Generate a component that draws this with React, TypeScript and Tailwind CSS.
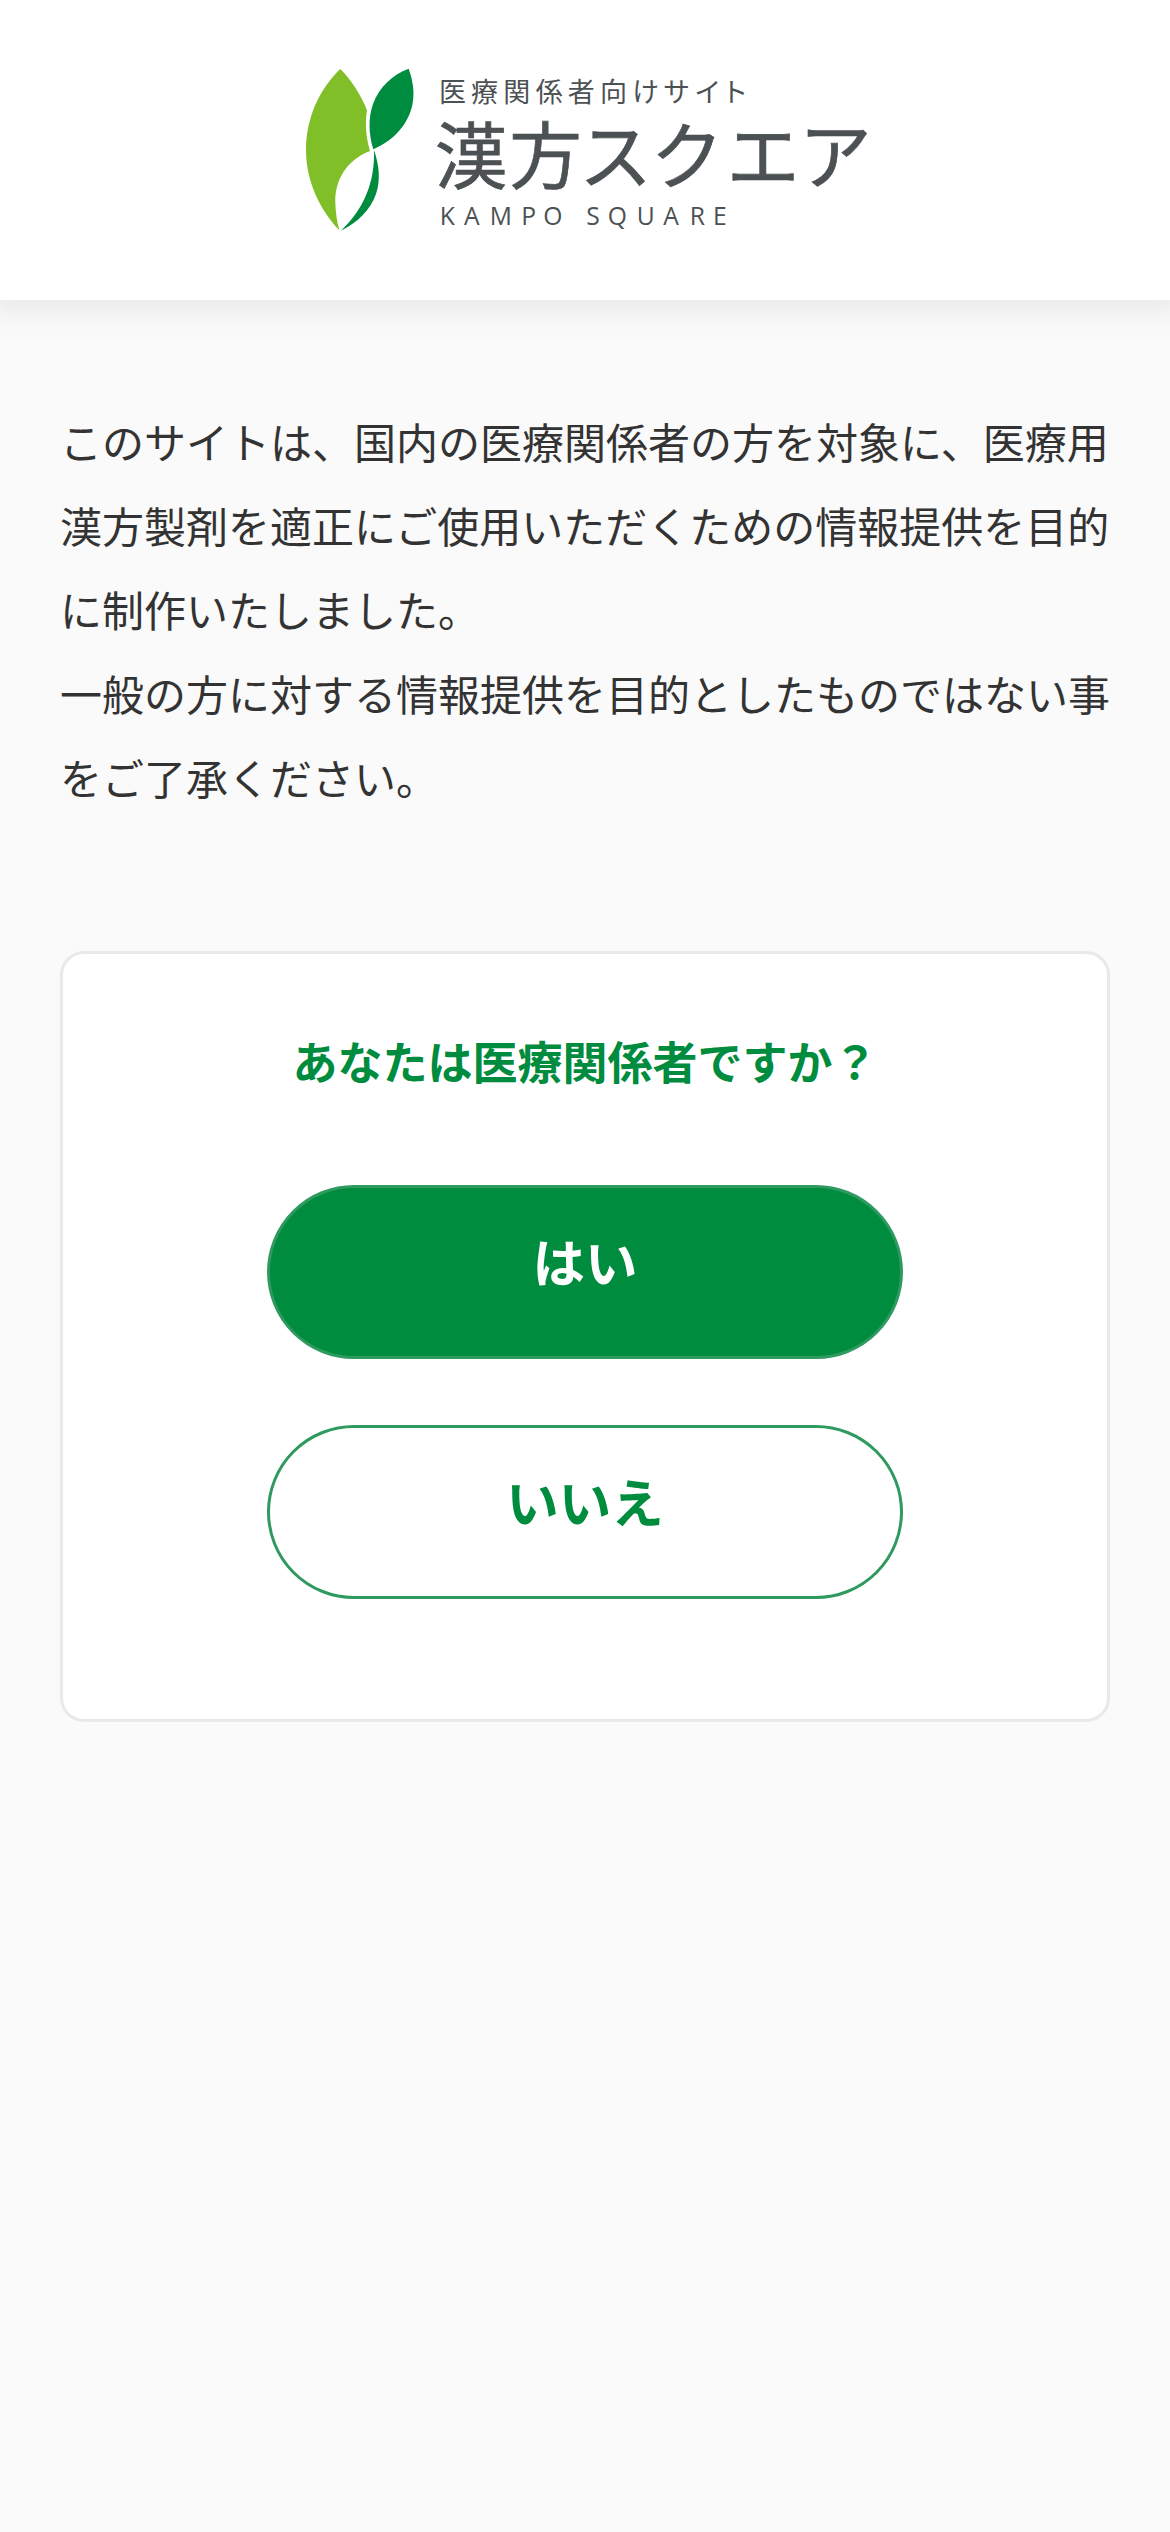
const Logo = () => (
  <svg
    className="h-[168px] w-[576px] fill-[#4c5153]"
    viewBox="21 45 1728 504"
    role="img"
    aria-label="漢方スクエア"
  >
    <path
      fill="#80bf28"
      d="M151 57C184 90 214 137 231 181C224 224 229 267 240 303C170 330 134 390 136 458C137 490 141 515 148 541C90 480 48 394 48 300C48 205 88 117 151 57Z"
    />
    <path
      fill="#008c3e"
      d="M356 56C382 128 371 184 336 232C314 262 288 280 250 298C236 253 234 205 249 162C268 110 308 74 356 56Z"
    />
    <path
      fill="#008c3e"
      d="M252 300C268 345 272 393 258 432C241 480 205 516 153 542C221 478 255 398 252 300Z"
    />
    <g fontFamily="'Noto Sans CJK JP', sans-serif">
      <text fontSize="81" x="447 543 640 737 833 930 1027 1119 1213 1294" y="157">
        医療関係者向けサイト
      </text>
      <text
        className="stroke-[#4c5153] stroke-2"
        fontSize="218"
        x="434 658 868 1082 1310 1527"
        y="399"
      >
        漢方スクエア
      </text>
    </g>
    <text
      fontFamily="'Open Sans', sans-serif"
      fontSize="74"
      x="449 522 599 694 760 889 953 1040 1120 1199 1269"
      y="526"
    >
      KAMPOSQUARE
    </text>
  </svg>
);

const App = () => {
  return (
    <div
      lang="ja"
      className="min-h-[2532px] overflow-x-hidden bg-[#fafafa] font-['Noto_Sans_CJK_JP',sans-serif] text-[#333]"
    >
      <header className="flex h-[300px] justify-center bg-white pt-[65px] shadow-[0_3px_24px_9px_rgba(0,0,0,0.07)]">
        <Logo />
      </header>

      <main className="px-[60px] pt-[99px]">
        <p className="text-[42px] leading-[84px]">
          このサイトは、国内の医療関係者の方を対象に、医療用漢方製剤を適正にご使用いただくための情報提供を目的に制作いたしました。
          <br />
          一般の方に対する情報提供を目的としたものではない事をご了承ください。
        </p>

        <section className="mt-[132px] flex h-[771px] flex-col items-center rounded-[24px] border-3 border-[#e9e9e9] bg-white pt-[74px]">
          <h1 className="text-[45px] leading-[66px] font-bold text-[#008c3e]">
            あなたは医療関係者ですか？
          </h1>
          <div className="mt-[91px] flex flex-col gap-[66px]">
            <button className="h-[174px] w-[636px] rounded-full border-3 border-[#2f9a5f] bg-[#008c3e] pb-[24px] text-[52.5px] font-bold text-white">
              はい
            </button>
            <button className="h-[174px] w-[636px] rounded-full border-3 border-[#2f9a5f] bg-white pb-[24px] text-[52.5px] font-bold text-[#008c3e]">
              いいえ
            </button>
          </div>
        </section>
      </main>
    </div>
  );
};

export default App;
